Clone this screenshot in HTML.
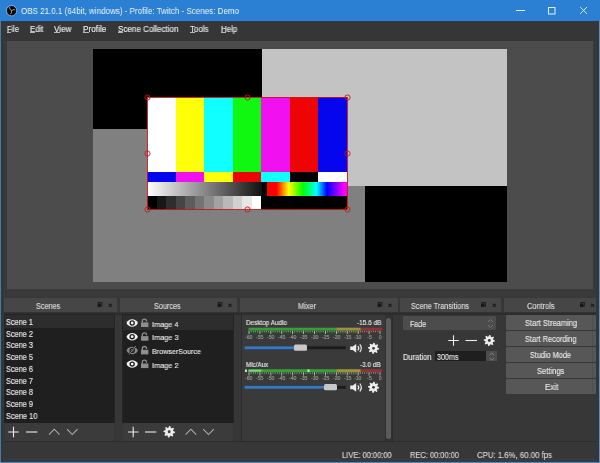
<!DOCTYPE html>
<html><head><meta charset="utf-8"><style>
html,body{margin:0;padding:0;}
body{width:600px;height:463px;position:relative;overflow:hidden;background:#383738;font-family:"Liberation Sans", sans-serif;}
span{white-space:nowrap;transform-origin:0 0;-webkit-text-stroke:0.15px currentColor;will-change:transform;}
</style></head><body>
<div style="position:absolute;left:0px;top:41px;width:600px;height:422px;background:#383738;"></div>
<div style="position:absolute;left:0px;top:0px;width:600px;height:21px;background:#2c80d3;"></div>
<div style="position:absolute;left:0px;top:21px;width:600px;height:20px;background:#373637;"></div>
<div style="position:absolute;left:0px;top:20px;width:600px;height:1px;background:#3a7cc0;"></div>
<div style="position:absolute;left:0px;top:21px;width:600px;height:1px;background:#2a3c50;"></div>
<div style="position:absolute;left:0px;top:22px;width:600px;height:1px;background:#33373d;"></div>
<div style="position:absolute;left:3.5px;top:41px;width:592.5px;height:257px;background:#3a393a;"></div>
<div style="position:absolute;left:7px;top:41px;width:586px;height:248px;background:#4c4c4c;"></div>
<div style="position:absolute;left:93px;top:49px;width:414px;height:233px;background:#808080;"></div>
<div style="position:absolute;left:93px;top:49px;width:169px;height:80px;background:#000;"></div>
<div style="position:absolute;left:262px;top:49px;width:245px;height:137px;background:#c3c3c3;"></div>
<div style="position:absolute;left:365px;top:186px;width:142px;height:96px;background:#000;"></div>
<div style="position:absolute;left:147.0px;top:97px;width:28.569999999999993px;height:75px;background:#fff;"></div>
<div style="position:absolute;left:147.0px;top:172px;width:28.569999999999993px;height:9.5px;background:#0606ee;"></div>
<div style="position:absolute;left:175.57px;top:97px;width:28.569999999999993px;height:75px;background:#ffff08;"></div>
<div style="position:absolute;left:175.57px;top:172px;width:28.569999999999993px;height:9.5px;background:#f010f0;"></div>
<div style="position:absolute;left:204.14px;top:97px;width:28.57000000000002px;height:75px;background:#10ffff;"></div>
<div style="position:absolute;left:204.14px;top:172px;width:28.57000000000002px;height:9.5px;background:#ffff08;"></div>
<div style="position:absolute;left:232.71px;top:97px;width:28.580000000000013px;height:75px;background:#10f810;"></div>
<div style="position:absolute;left:232.71px;top:172px;width:28.580000000000013px;height:9.5px;background:#ee0404;"></div>
<div style="position:absolute;left:261.29px;top:97px;width:28.569999999999993px;height:75px;background:#f010f0;"></div>
<div style="position:absolute;left:261.29px;top:172px;width:28.569999999999993px;height:9.5px;background:#10ffff;"></div>
<div style="position:absolute;left:289.86px;top:97px;width:28.569999999999993px;height:75px;background:#ee0404;"></div>
<div style="position:absolute;left:289.86px;top:172px;width:28.569999999999993px;height:9.5px;background:#000;"></div>
<div style="position:absolute;left:318.43px;top:97px;width:28.569999999999993px;height:75px;background:#0606ee;"></div>
<div style="position:absolute;left:318.43px;top:172px;width:28.569999999999993px;height:9.5px;background:#fff;"></div>
<div style="position:absolute;left:147px;top:181.5px;width:115px;height:14.5px;background:#000;background:linear-gradient(90deg,#fff,#111);"></div>
<div style="position:absolute;left:262px;top:181.5px;width:5px;height:14.5px;background:#000;"></div>
<div style="position:absolute;left:267px;top:181.5px;width:80px;height:14.5px;background:#000;background:linear-gradient(90deg,#f00 0%,#f00 12%,#ff0 27%,#0f0 45%,#0ff 62%,#00f 75%,#f0f 97%);"></div>
<div style="position:absolute;left:147px;top:196px;width:200px;height:13.5px;background:#000;"></div>
<div style="position:absolute;left:147.0px;top:196px;width:9.5px;height:13.5px;background:rgb(0,0,0);"></div>
<div style="position:absolute;left:156.5px;top:196px;width:9.5px;height:13.5px;background:rgb(23,23,23);"></div>
<div style="position:absolute;left:166.0px;top:196px;width:9.5px;height:13.5px;background:rgb(46,46,46);"></div>
<div style="position:absolute;left:175.5px;top:196px;width:9.5px;height:13.5px;background:rgb(69,69,69);"></div>
<div style="position:absolute;left:185.0px;top:196px;width:9.5px;height:13.5px;background:rgb(92,92,92);"></div>
<div style="position:absolute;left:194.5px;top:196px;width:9.5px;height:13.5px;background:rgb(115,115,115);"></div>
<div style="position:absolute;left:204.0px;top:196px;width:9.5px;height:13.5px;background:rgb(139,139,139);"></div>
<div style="position:absolute;left:213.5px;top:196px;width:9.5px;height:13.5px;background:rgb(162,162,162);"></div>
<div style="position:absolute;left:223.0px;top:196px;width:9.5px;height:13.5px;background:rgb(185,185,185);"></div>
<div style="position:absolute;left:232.5px;top:196px;width:9.5px;height:13.5px;background:rgb(208,208,208);"></div>
<div style="position:absolute;left:242.0px;top:196px;width:9.5px;height:13.5px;background:rgb(231,231,231);"></div>
<div style="position:absolute;left:251.5px;top:196px;width:9.5px;height:13.5px;background:rgb(255,255,255);"></div>
<svg style="position:absolute;left:0;top:0" width="600" height="463"><g fill="none" stroke="#c81818" stroke-width="0.9"><rect x="147.5" y="97.5" width="200" height="112"/><circle cx="147.5" cy="97.5" r="2.6"/><circle cx="147.5" cy="153.5" r="2.6"/><circle cx="147.5" cy="209.5" r="2.6"/><circle cx="247.5" cy="97.5" r="2.6"/><circle cx="247.5" cy="209.5" r="2.6"/><circle cx="347.5" cy="97.5" r="2.6"/><circle cx="347.5" cy="153.5" r="2.6"/><circle cx="347.5" cy="209.5" r="2.6"/></g></svg>
<svg style="position:absolute;left:0;top:0" width="600" height="21"><circle cx="11.6" cy="10.7" r="5.2" fill="#06080c" stroke="#9cc8f0" stroke-width="0.8"/><path d="M11.6 10.7 Q9.3 10.2 9.5 7.4 M11.6 10.7 Q13 8.8 14.8 9.7 M11.6 10.7 Q12 12.7 10.7 14" stroke="#9a9ea2" stroke-width="0.95" fill="none" stroke-linecap="round"/><line x1="516" y1="10.5" x2="525" y2="10.5" stroke="#e4f0fc" stroke-width="1"/><rect x="548.5" y="7.5" width="6.5" height="6.5" fill="none" stroke="#e4f0fc" stroke-width="1"/><path d="M580.2 7 L587 13.8 M587 7 L580.2 13.8" stroke="#e4f0fc" stroke-width="0.95"/></svg>
<div style="position:absolute;left:6.5px;top:32.3px;width:4.5px;height:0.8000000000000043px;background:#b8b7b8;"></div>
<div style="position:absolute;left:29.9px;top:32.3px;width:4.799999999999997px;height:0.8000000000000043px;background:#b8b7b8;"></div>
<div style="position:absolute;left:54.2px;top:32.3px;width:5.600000000000001px;height:0.8000000000000043px;background:#b8b7b8;"></div>
<div style="position:absolute;left:83.4px;top:32.3px;width:5.200000000000003px;height:0.8000000000000043px;background:#b8b7b8;"></div>
<div style="position:absolute;left:117.5px;top:32.3px;width:5.200000000000003px;height:0.8000000000000043px;background:#b8b7b8;"></div>
<div style="position:absolute;left:190px;top:32.3px;width:5px;height:0.8000000000000043px;background:#b8b7b8;"></div>
<div style="position:absolute;left:220.8px;top:32.3px;width:5.599999999999994px;height:0.8000000000000043px;background:#b8b7b8;"></div>
<div style="position:absolute;left:117px;top:298px;width:2.5px;height:14px;background:#383738;"></div>
<div style="position:absolute;left:236.5px;top:298px;width:2.5px;height:14px;background:#383738;"></div>
<div style="position:absolute;left:397.5px;top:298px;width:2.5px;height:14px;background:#383738;"></div>
<div style="position:absolute;left:501.2px;top:298px;width:2.5px;height:14px;background:#383738;"></div>
<div style="position:absolute;left:4px;top:298px;width:113px;height:14px;background:#474647;"></div>
<svg style="position:absolute;left:0;top:0" width="600" height="463"><g fill="#1a1a1a" stroke="none"><rect x="97.5" y="303.5" width="3.5" height="3.5"/><rect x="98.5" y="302.5" width="3.5" height="3.5" fill="none" stroke="#1a1a1a" stroke-width="0.8"/></g><path d="M108.8 303.8 L111.8 306.8 M111.8 303.8 L108.8 306.8" stroke="#1a1a1a" stroke-width="1.1"/></svg>
<div style="position:absolute;left:119.5px;top:298px;width:117.0px;height:14px;background:#474647;"></div>
<svg style="position:absolute;left:0;top:0" width="600" height="463"><g fill="#1a1a1a" stroke="none"><rect x="217.5" y="303.5" width="3.5" height="3.5"/><rect x="218.5" y="302.5" width="3.5" height="3.5" fill="none" stroke="#1a1a1a" stroke-width="0.8"/></g><path d="M228.5 303.8 L231.5 306.8 M231.5 303.8 L228.5 306.8" stroke="#1a1a1a" stroke-width="1.1"/></svg>
<div style="position:absolute;left:240px;top:298px;width:157.5px;height:14px;background:#474647;"></div>
<svg style="position:absolute;left:0;top:0" width="600" height="463"><g fill="#1a1a1a" stroke="none"><rect x="377.5" y="303.5" width="3.5" height="3.5"/><rect x="378.5" y="302.5" width="3.5" height="3.5" fill="none" stroke="#1a1a1a" stroke-width="0.8"/></g><path d="M388.5 303.8 L391.5 306.8 M391.5 303.8 L388.5 306.8" stroke="#1a1a1a" stroke-width="1.1"/></svg>
<div style="position:absolute;left:400px;top:298px;width:101.19999999999999px;height:14px;background:#474647;"></div>
<svg style="position:absolute;left:0;top:0" width="600" height="463"><g fill="#1a1a1a" stroke="none"><rect x="481" y="303.5" width="3.5" height="3.5"/><rect x="482" y="302.5" width="3.5" height="3.5" fill="none" stroke="#1a1a1a" stroke-width="0.8"/></g><path d="M492.8 303.8 L495.8 306.8 M495.8 303.8 L492.8 306.8" stroke="#1a1a1a" stroke-width="1.1"/></svg>
<div style="position:absolute;left:503.7px;top:298px;width:92.30000000000001px;height:14px;background:#474647;"></div>
<svg style="position:absolute;left:0;top:0" width="600" height="463"><g fill="#1a1a1a" stroke="none"><rect x="580" y="303.5" width="3.5" height="3.5"/><rect x="581" y="302.5" width="3.5" height="3.5" fill="none" stroke="#1a1a1a" stroke-width="0.8"/></g><path d="M591 303.8 L594 306.8 M594 303.8 L591 306.8" stroke="#1a1a1a" stroke-width="1.1"/></svg>
<div style="position:absolute;left:4px;top:312px;width:592px;height:3px;background:#343334;"></div>
<div style="position:absolute;left:4px;top:313px;width:592px;height:2px;background:#2e2d2e;"></div>
<div style="position:absolute;left:4px;top:441px;width:592px;height:1px;background:#2e2d2e;"></div>
<div style="position:absolute;left:0px;top:457.5px;width:600px;height:4.0px;background:#363a42;"></div>
<div style="position:absolute;left:4px;top:314px;width:110.5px;height:109px;background:#252425;"></div>
<div style="position:absolute;left:5px;top:315px;width:108.5px;height:107.5px;background:#201f20;"></div>
<div style="position:absolute;left:5px;top:315px;width:108.5px;height:12.800000000000011px;background:#2e2d2e;"></div>
<div style="position:absolute;left:5px;top:422.5px;width:108.5px;height:18.5px;background:#3c3b3c;"></div>
<div style="position:absolute;left:121.5px;top:314px;width:112.1px;height:109px;background:#252425;"></div>
<div style="position:absolute;left:122.5px;top:315px;width:110.1px;height:107.5px;background:#201f20;"></div>
<div style="position:absolute;left:122.5px;top:315px;width:110.1px;height:14.600000000000023px;background:#2e2d2e;"></div>
<div style="position:absolute;left:122.5px;top:422.5px;width:110.1px;height:18.5px;background:#3c3b3c;"></div>
<svg style="position:absolute;left:0;top:0" width="600" height="463"><path d="M8.2 432 H18.8 M13.5 426.7 V437.3" stroke="#ececec" stroke-width="1.1" fill="none"/><path d="M26 432 H37.5" stroke="#ececec" stroke-width="1.1" fill="none"/><path d="M49 434.6 L54.25 429.2 L59.5 434.6" stroke="#b0b0b0" stroke-width="1.05" fill="none"/><path d="M67 429.2 L72.25 434.6 L77.5 429.2" stroke="#b0b0b0" stroke-width="1.05" fill="none"/><path d="M127.89999999999999 432 H138.5 M133.2 426.7 V437.3" stroke="#ececec" stroke-width="1.1" fill="none"/><path d="M145 432 H156.3" stroke="#ececec" stroke-width="1.1" fill="none"/><polygon points="169.20,426.00 170.33,426.11 170.80,427.94 171.52,428.33 173.30,427.70 174.02,428.58 173.06,430.20 173.30,430.99 175.00,431.80 174.89,432.93 173.06,433.40 172.67,434.12 173.30,435.90 172.42,436.62 170.80,435.66 170.01,435.90 169.20,437.60 168.07,437.49 167.60,435.66 166.88,435.27 165.10,435.90 164.38,435.02 165.34,433.40 165.10,432.61 163.40,431.80 163.51,430.67 165.34,430.20 165.73,429.48 165.10,427.70 165.98,426.98 167.60,427.94 168.39,427.70" fill="#ececec"/><circle cx="169.2" cy="431.8" r="1.45" fill="#3c3b3c"/><path d="M185.6 434.6 L190.89999999999998 429.2 L196.2 434.6" stroke="#b0b0b0" stroke-width="1.05" fill="none"/><path d="M203.2 429.2 L208.5 434.6 L213.8 429.2" stroke="#b0b0b0" stroke-width="1.05" fill="none"/></svg>
<svg style="position:absolute;left:0;top:0" width="600" height="463"><path d="M126.49999999999999 323.0 C128.6 318.0 135.79999999999998 318.0 137.89999999999998 323.0 C135.79999999999998 328.0 128.6 328.0 126.49999999999999 323.0 Z" fill="#f2f2f2"/><circle cx="132.2" cy="323.0" r="2.7" fill="#1e1d1e"/><circle cx="132.2" cy="323.0" r="1.4" fill="#f2f2f2"/><rect x="141" y="322.40000000000003" width="7.4" height="4.6" fill="#8e8e8e"/><path d="M142.3 322.6 V321.0 Q142.3 319.1 144.4 319.1 Q146.5 319.1 146.5 321.0 V321.6" stroke="#8e8e8e" stroke-width="1.3" fill="none"/><path d="M126.49999999999999 336.7 C128.6 331.7 135.79999999999998 331.7 137.89999999999998 336.7 C135.79999999999998 341.7 128.6 341.7 126.49999999999999 336.7 Z" fill="#f2f2f2"/><circle cx="132.2" cy="336.7" r="2.7" fill="#1e1d1e"/><circle cx="132.2" cy="336.7" r="1.4" fill="#f2f2f2"/><rect x="141" y="336.1" width="7.4" height="4.6" fill="#8e8e8e"/><path d="M142.3 336.3 V334.7 Q142.3 332.8 144.4 332.8 Q146.5 332.8 146.5 334.7 V335.3" stroke="#8e8e8e" stroke-width="1.3" fill="none"/><path d="M126.49999999999999 350.4 C128.6 345.4 135.79999999999998 345.4 137.89999999999998 350.4 C135.79999999999998 355.4 128.6 355.4 126.49999999999999 350.4 Z" fill="#8a8a8a"/><circle cx="132.2" cy="350.4" r="2.7" fill="#1e1d1e"/><circle cx="132.2" cy="350.4" r="1.4" fill="#8a8a8a"/><path d="M129.0 354.59999999999997 L135.79999999999998 346.0" stroke="#1e1d1e" stroke-width="2"/><path d="M129.0 354.59999999999997 L135.79999999999998 346.0" stroke="#8a8a8a" stroke-width="1"/><rect x="141" y="349.8" width="7.4" height="4.6" fill="#8e8e8e"/><path d="M142.3 350.0 V348.4 Q142.3 346.5 144.4 346.5 Q146.5 346.5 146.5 348.4 V349.0" stroke="#8e8e8e" stroke-width="1.3" fill="none"/><path d="M126.49999999999999 364.1 C128.6 359.1 135.79999999999998 359.1 137.89999999999998 364.1 C135.79999999999998 369.1 128.6 369.1 126.49999999999999 364.1 Z" fill="#f2f2f2"/><circle cx="132.2" cy="364.1" r="2.7" fill="#1e1d1e"/><circle cx="132.2" cy="364.1" r="1.4" fill="#f2f2f2"/><rect x="141" y="363.50000000000006" width="7.4" height="4.6" fill="#8e8e8e"/><path d="M142.3 363.70000000000005 V362.1 Q142.3 360.20000000000005 144.4 360.20000000000005 Q146.5 360.20000000000005 146.5 362.1 V362.70000000000005" stroke="#8e8e8e" stroke-width="1.3" fill="none"/></svg>
<div style="position:absolute;left:240.5px;top:314.5px;width:152.5px;height:127.0px;background:#2c2b2c;"></div>
<div style="position:absolute;left:241.5px;top:315px;width:150.5px;height:126px;background:#3b3a3b;"></div>
<div style="position:absolute;left:384.5px;top:315px;width:7.5px;height:126px;background:#323132;"></div>
<div style="position:absolute;left:385.5px;top:318px;width:5.5px;height:121px;background:#5c5b5c;border-radius:2.5px;"></div>
<svg style="position:absolute;left:0;top:0" width="600" height="463"><rect x="248.5" y="327.7" width="87.69999999999999" height="3" fill="#3c9c3c"/><rect x="336.2" y="327.7" width="24.600000000000023" height="3" fill="#969440"/><rect x="360.8" y="327.7" width="21.19999999999999" height="3" fill="#8e3636"/><rect x="248.5" y="330.7" width="87.69999999999999" height="2.5" fill="#2c4a2e"/><rect x="336.2" y="330.7" width="24.600000000000023" height="2.5" fill="#4a4a30"/><rect x="360.8" y="330.7" width="21.19999999999999" height="2.5" fill="#4a3030"/><rect x="248.60" y="330.7" width="0.8" height="3.3" fill="#c8d8c8"/><rect x="250.78" y="330.7" width="0.8" height="1.6" fill="#90a090"/><rect x="252.97" y="330.7" width="0.8" height="1.6" fill="#90a090"/><rect x="255.15" y="330.7" width="0.8" height="1.6" fill="#90a090"/><rect x="257.33" y="330.7" width="0.8" height="1.6" fill="#90a090"/><rect x="259.52" y="330.7" width="0.8" height="3.3" fill="#c8d8c8"/><rect x="261.70" y="330.7" width="0.8" height="1.6" fill="#90a090"/><rect x="263.88" y="330.7" width="0.8" height="1.6" fill="#90a090"/><rect x="266.07" y="330.7" width="0.8" height="1.6" fill="#90a090"/><rect x="268.25" y="330.7" width="0.8" height="1.6" fill="#90a090"/><rect x="270.43" y="330.7" width="0.8" height="3.3" fill="#c8d8c8"/><rect x="272.62" y="330.7" width="0.8" height="1.6" fill="#90a090"/><rect x="274.80" y="330.7" width="0.8" height="1.6" fill="#90a090"/><rect x="276.98" y="330.7" width="0.8" height="1.6" fill="#90a090"/><rect x="279.17" y="330.7" width="0.8" height="1.6" fill="#90a090"/><rect x="281.35" y="330.7" width="0.8" height="3.3" fill="#c8d8c8"/><rect x="283.53" y="330.7" width="0.8" height="1.6" fill="#90a090"/><rect x="285.72" y="330.7" width="0.8" height="1.6" fill="#90a090"/><rect x="287.90" y="330.7" width="0.8" height="1.6" fill="#90a090"/><rect x="290.08" y="330.7" width="0.8" height="1.6" fill="#90a090"/><rect x="292.27" y="330.7" width="0.8" height="3.3" fill="#c8d8c8"/><rect x="294.45" y="330.7" width="0.8" height="1.6" fill="#90a090"/><rect x="296.63" y="330.7" width="0.8" height="1.6" fill="#90a090"/><rect x="298.82" y="330.7" width="0.8" height="1.6" fill="#90a090"/><rect x="301.00" y="330.7" width="0.8" height="1.6" fill="#90a090"/><rect x="303.18" y="330.7" width="0.8" height="3.3" fill="#c8d8c8"/><rect x="305.37" y="330.7" width="0.8" height="1.6" fill="#90a090"/><rect x="307.55" y="330.7" width="0.8" height="1.6" fill="#90a090"/><rect x="309.73" y="330.7" width="0.8" height="1.6" fill="#90a090"/><rect x="311.92" y="330.7" width="0.8" height="1.6" fill="#90a090"/><rect x="314.10" y="330.7" width="0.8" height="3.3" fill="#c8d8c8"/><rect x="316.28" y="330.7" width="0.8" height="1.6" fill="#90a090"/><rect x="318.47" y="330.7" width="0.8" height="1.6" fill="#90a090"/><rect x="320.65" y="330.7" width="0.8" height="1.6" fill="#90a090"/><rect x="322.83" y="330.7" width="0.8" height="1.6" fill="#90a090"/><rect x="325.02" y="330.7" width="0.8" height="3.3" fill="#c8d8c8"/><rect x="327.20" y="330.7" width="0.8" height="1.6" fill="#90a090"/><rect x="329.38" y="330.7" width="0.8" height="1.6" fill="#90a090"/><rect x="331.57" y="330.7" width="0.8" height="1.6" fill="#90a090"/><rect x="333.75" y="330.7" width="0.8" height="1.6" fill="#90a090"/><rect x="335.93" y="330.7" width="0.8" height="3.3" fill="#c8d8c8"/><rect x="338.12" y="330.7" width="0.8" height="1.6" fill="#90a090"/><rect x="340.30" y="330.7" width="0.8" height="1.6" fill="#90a090"/><rect x="342.48" y="330.7" width="0.8" height="1.6" fill="#90a090"/><rect x="344.67" y="330.7" width="0.8" height="1.6" fill="#90a090"/><rect x="346.85" y="330.7" width="0.8" height="3.3" fill="#c8d8c8"/><rect x="349.03" y="330.7" width="0.8" height="1.6" fill="#90a090"/><rect x="351.22" y="330.7" width="0.8" height="1.6" fill="#90a090"/><rect x="353.40" y="330.7" width="0.8" height="1.6" fill="#90a090"/><rect x="355.58" y="330.7" width="0.8" height="1.6" fill="#90a090"/><rect x="357.77" y="330.7" width="0.8" height="3.3" fill="#c8d8c8"/><rect x="359.95" y="330.7" width="0.8" height="1.6" fill="#90a090"/><rect x="362.13" y="330.7" width="0.8" height="1.6" fill="#90a090"/><rect x="364.32" y="330.7" width="0.8" height="1.6" fill="#90a090"/><rect x="366.50" y="330.7" width="0.8" height="1.6" fill="#90a090"/><rect x="368.68" y="330.7" width="0.8" height="3.3" fill="#c8d8c8"/><rect x="370.87" y="330.7" width="0.8" height="1.6" fill="#90a090"/><rect x="373.05" y="330.7" width="0.8" height="1.6" fill="#90a090"/><rect x="375.23" y="330.7" width="0.8" height="1.6" fill="#90a090"/><rect x="377.42" y="330.7" width="0.8" height="1.6" fill="#90a090"/><rect x="379.60" y="330.7" width="0.8" height="3.3" fill="#c8d8c8"/><rect x="248.5" y="369.2" width="87.69999999999999" height="3" fill="#3c9c3c"/><rect x="336.2" y="369.2" width="24.600000000000023" height="3" fill="#969440"/><rect x="360.8" y="369.2" width="21.19999999999999" height="3" fill="#8e3636"/><rect x="248.5" y="372.2" width="87.69999999999999" height="2.5" fill="#2c4a2e"/><rect x="336.2" y="372.2" width="24.600000000000023" height="2.5" fill="#4a4a30"/><rect x="360.8" y="372.2" width="21.19999999999999" height="2.5" fill="#4a3030"/><rect x="248.5" y="369.7" width="13.0" height="2" fill="#78d878"/><rect x="245" y="369.5" width="2" height="2.4" fill="#c8f0c8"/><rect x="307.5" y="369.5" width="2" height="2.4" fill="#c8f0c8"/><rect x="248.60" y="372.2" width="0.8" height="3.3" fill="#c8d8c8"/><rect x="250.78" y="372.2" width="0.8" height="1.6" fill="#90a090"/><rect x="252.97" y="372.2" width="0.8" height="1.6" fill="#90a090"/><rect x="255.15" y="372.2" width="0.8" height="1.6" fill="#90a090"/><rect x="257.33" y="372.2" width="0.8" height="1.6" fill="#90a090"/><rect x="259.52" y="372.2" width="0.8" height="3.3" fill="#c8d8c8"/><rect x="261.70" y="372.2" width="0.8" height="1.6" fill="#90a090"/><rect x="263.88" y="372.2" width="0.8" height="1.6" fill="#90a090"/><rect x="266.07" y="372.2" width="0.8" height="1.6" fill="#90a090"/><rect x="268.25" y="372.2" width="0.8" height="1.6" fill="#90a090"/><rect x="270.43" y="372.2" width="0.8" height="3.3" fill="#c8d8c8"/><rect x="272.62" y="372.2" width="0.8" height="1.6" fill="#90a090"/><rect x="274.80" y="372.2" width="0.8" height="1.6" fill="#90a090"/><rect x="276.98" y="372.2" width="0.8" height="1.6" fill="#90a090"/><rect x="279.17" y="372.2" width="0.8" height="1.6" fill="#90a090"/><rect x="281.35" y="372.2" width="0.8" height="3.3" fill="#c8d8c8"/><rect x="283.53" y="372.2" width="0.8" height="1.6" fill="#90a090"/><rect x="285.72" y="372.2" width="0.8" height="1.6" fill="#90a090"/><rect x="287.90" y="372.2" width="0.8" height="1.6" fill="#90a090"/><rect x="290.08" y="372.2" width="0.8" height="1.6" fill="#90a090"/><rect x="292.27" y="372.2" width="0.8" height="3.3" fill="#c8d8c8"/><rect x="294.45" y="372.2" width="0.8" height="1.6" fill="#90a090"/><rect x="296.63" y="372.2" width="0.8" height="1.6" fill="#90a090"/><rect x="298.82" y="372.2" width="0.8" height="1.6" fill="#90a090"/><rect x="301.00" y="372.2" width="0.8" height="1.6" fill="#90a090"/><rect x="303.18" y="372.2" width="0.8" height="3.3" fill="#c8d8c8"/><rect x="305.37" y="372.2" width="0.8" height="1.6" fill="#90a090"/><rect x="307.55" y="372.2" width="0.8" height="1.6" fill="#90a090"/><rect x="309.73" y="372.2" width="0.8" height="1.6" fill="#90a090"/><rect x="311.92" y="372.2" width="0.8" height="1.6" fill="#90a090"/><rect x="314.10" y="372.2" width="0.8" height="3.3" fill="#c8d8c8"/><rect x="316.28" y="372.2" width="0.8" height="1.6" fill="#90a090"/><rect x="318.47" y="372.2" width="0.8" height="1.6" fill="#90a090"/><rect x="320.65" y="372.2" width="0.8" height="1.6" fill="#90a090"/><rect x="322.83" y="372.2" width="0.8" height="1.6" fill="#90a090"/><rect x="325.02" y="372.2" width="0.8" height="3.3" fill="#c8d8c8"/><rect x="327.20" y="372.2" width="0.8" height="1.6" fill="#90a090"/><rect x="329.38" y="372.2" width="0.8" height="1.6" fill="#90a090"/><rect x="331.57" y="372.2" width="0.8" height="1.6" fill="#90a090"/><rect x="333.75" y="372.2" width="0.8" height="1.6" fill="#90a090"/><rect x="335.93" y="372.2" width="0.8" height="3.3" fill="#c8d8c8"/><rect x="338.12" y="372.2" width="0.8" height="1.6" fill="#90a090"/><rect x="340.30" y="372.2" width="0.8" height="1.6" fill="#90a090"/><rect x="342.48" y="372.2" width="0.8" height="1.6" fill="#90a090"/><rect x="344.67" y="372.2" width="0.8" height="1.6" fill="#90a090"/><rect x="346.85" y="372.2" width="0.8" height="3.3" fill="#c8d8c8"/><rect x="349.03" y="372.2" width="0.8" height="1.6" fill="#90a090"/><rect x="351.22" y="372.2" width="0.8" height="1.6" fill="#90a090"/><rect x="353.40" y="372.2" width="0.8" height="1.6" fill="#90a090"/><rect x="355.58" y="372.2" width="0.8" height="1.6" fill="#90a090"/><rect x="357.77" y="372.2" width="0.8" height="3.3" fill="#c8d8c8"/><rect x="359.95" y="372.2" width="0.8" height="1.6" fill="#90a090"/><rect x="362.13" y="372.2" width="0.8" height="1.6" fill="#90a090"/><rect x="364.32" y="372.2" width="0.8" height="1.6" fill="#90a090"/><rect x="366.50" y="372.2" width="0.8" height="1.6" fill="#90a090"/><rect x="368.68" y="372.2" width="0.8" height="3.3" fill="#c8d8c8"/><rect x="370.87" y="372.2" width="0.8" height="1.6" fill="#90a090"/><rect x="373.05" y="372.2" width="0.8" height="1.6" fill="#90a090"/><rect x="375.23" y="372.2" width="0.8" height="1.6" fill="#90a090"/><rect x="377.42" y="372.2" width="0.8" height="1.6" fill="#90a090"/><rect x="379.60" y="372.2" width="0.8" height="3.3" fill="#c8d8c8"/><path d="M350.2 346.5 H352.8 L356.2 343.9 V352.7 L352.8 350.09999999999997 H350.2 Z" fill="#ececec"/><path d="M357.8 346.2 Q359.8 348.29999999999995 357.8 350.4 M359.8 344.4 Q362.9 348.29999999999995 359.8 352.2" stroke="#ececec" stroke-width="1.2" fill="none"/><polygon points="373.50,342.70 374.59,342.81 375.04,344.57 375.74,344.95 377.46,344.34 378.16,345.19 377.23,346.76 377.45,347.51 379.10,348.30 378.99,349.39 377.23,349.84 376.85,350.54 377.46,352.26 376.61,352.96 375.04,352.03 374.29,352.25 373.50,353.90 372.41,353.79 371.96,352.03 371.26,351.65 369.54,352.26 368.84,351.41 369.77,349.84 369.55,349.09 367.90,348.30 368.01,347.21 369.77,346.76 370.15,346.06 369.54,344.34 370.39,343.64 371.96,344.57 372.71,344.35" fill="#ececec"/><circle cx="373.5" cy="348.3" r="1.40" fill="#3b3a3b"/><path d="M350.2 385.6 H352.8 L356.2 383.0 V391.8 L352.8 389.2 H350.2 Z" fill="#ececec"/><path d="M357.8 385.3 Q359.8 387.4 357.8 389.5 M359.8 383.5 Q362.9 387.4 359.8 391.3" stroke="#ececec" stroke-width="1.2" fill="none"/><polygon points="373.50,381.70 374.59,381.81 375.04,383.57 375.74,383.95 377.46,383.34 378.16,384.19 377.23,385.76 377.45,386.51 379.10,387.30 378.99,388.39 377.23,388.84 376.85,389.54 377.46,391.26 376.61,391.96 375.04,391.03 374.29,391.25 373.50,392.90 372.41,392.79 371.96,391.03 371.26,390.65 369.54,391.26 368.84,390.41 369.77,388.84 369.55,388.09 367.90,387.30 368.01,386.21 369.77,385.76 370.15,385.06 369.54,383.34 370.39,382.64 371.96,383.57 372.71,383.35" fill="#ececec"/><circle cx="373.5" cy="387.3" r="1.40" fill="#3b3a3b"/><rect x="244.5" y="346.3" width="101.5" height="3" fill="#1e1d1e"/><rect x="244.5" y="346.3" width="50" height="3" fill="#3579c4"/><rect x="294" y="344.6" width="13" height="6.2" rx="1.5" fill="#c8c8c8"/><rect x="244.5" y="385.8" width="101.5" height="3" fill="#1e1d1e"/><rect x="244.5" y="385.8" width="80" height="3" fill="#3579c4"/><rect x="324" y="384" width="13" height="6.2" rx="1.5" fill="#c8c8c8"/></svg>
<div style="position:absolute;left:402.7px;top:316.2px;width:93.30000000000001px;height:14.0px;background:#4d4c4d;border-radius:1px;"></div>
<svg style="position:absolute;left:0;top:0" width="600" height="463"><path d="M488 322 L490.5 319.5 L493 322 M488 325 L490.5 327.5 L493 325" stroke="#777" stroke-width="0.9" fill="none"/></svg>
<svg style="position:absolute;left:0;top:0" width="600" height="463"><path d="M448.2 340.5 H458.8 M453.5 335.2 V345.8" stroke="#ececec" stroke-width="1.1" fill="none"/><path d="M465.5 340.5 H477" stroke="#ececec" stroke-width="1.1" fill="none"/><polygon points="489.30,334.90 490.39,335.01 490.84,336.77 491.54,337.15 493.26,336.54 493.96,337.39 493.03,338.96 493.25,339.71 494.90,340.50 494.79,341.59 493.03,342.04 492.65,342.74 493.26,344.46 492.41,345.16 490.84,344.23 490.09,344.45 489.30,346.10 488.21,345.99 487.76,344.23 487.06,343.85 485.34,344.46 484.64,343.61 485.57,342.04 485.35,341.29 483.70,340.50 483.81,339.41 485.57,338.96 485.95,338.26 485.34,336.54 486.19,335.84 487.76,336.77 488.51,336.55" fill="#ececec"/><circle cx="489.3" cy="340.5" r="1.40" fill="#383738"/></svg>
<div style="position:absolute;left:434.5px;top:350.8px;width:51.5px;height:10.5px;background:#201f20;"></div>
<div style="position:absolute;left:486px;top:350.8px;width:11px;height:10.5px;background:#4d4c4d;"></div>
<svg style="position:absolute;left:0;top:0" width="600" height="463"><path d="M489.5 355 L491.7 353 L494 355 M489.5 358 L491.7 360 L494 358" stroke="#888" stroke-width="0.9" fill="none"/></svg>
<div style="position:absolute;left:506px;top:315.0px;width:89.5px;height:14.600000000000023px;background:#585758;border-radius:1px;"></div>
<div style="position:absolute;left:592px;top:315.0px;width:1px;height:14.600000000000023px;background:#504f50;"></div>
<div style="position:absolute;left:506px;top:331.1px;width:89.5px;height:14.600000000000023px;background:#585758;border-radius:1px;"></div>
<div style="position:absolute;left:592px;top:331.1px;width:1px;height:14.600000000000023px;background:#504f50;"></div>
<div style="position:absolute;left:506px;top:347.2px;width:89.5px;height:14.600000000000023px;background:#585758;border-radius:1px;"></div>
<div style="position:absolute;left:592px;top:347.2px;width:1px;height:14.600000000000023px;background:#504f50;"></div>
<div style="position:absolute;left:506px;top:363.3px;width:89.5px;height:14.600000000000023px;background:#585758;border-radius:1px;"></div>
<div style="position:absolute;left:592px;top:363.3px;width:1px;height:14.600000000000023px;background:#504f50;"></div>
<div style="position:absolute;left:506px;top:379.4px;width:89.5px;height:14.600000000000023px;background:#585758;border-radius:1px;"></div>
<div style="position:absolute;left:592px;top:379.4px;width:1px;height:14.600000000000023px;background:#504f50;"></div>
<div style="position:absolute;left:0px;top:21px;width:1.3px;height:442px;background:#5079a0;"></div>
<div style="position:absolute;left:1.3px;top:21px;width:2.2px;height:442px;background:#30373f;"></div>
<div style="position:absolute;left:599px;top:21px;width:1px;height:442px;background:#6a8cae;"></div>
<div style="position:absolute;left:596px;top:21px;width:3px;height:442px;background:#30373f;"></div>
<div style="position:absolute;left:0px;top:461.5px;width:600px;height:1.5px;background:#5a84ac;"></div>
<span style="position:absolute;left:21.00px;top:6.41px;font-size:9.6px;line-height:10.723px;color:#eef5fc;transform:scaleX(0.8349);-webkit-text-stroke:0;">OBS 21.0.1 (64bit, windows) - Profile: Twitch - Scenes: Demo</span>
<span style="position:absolute;left:6.50px;top:25.48px;font-size:8.2px;line-height:9.159px;color:#e8e7e8;transform:scaleX(0.9013);">File</span>
<span style="position:absolute;left:29.90px;top:25.48px;font-size:8.2px;line-height:9.159px;color:#e8e7e8;transform:scaleX(0.9497);">Edit</span>
<span style="position:absolute;left:54.20px;top:25.48px;font-size:8.2px;line-height:9.159px;color:#e8e7e8;transform:scaleX(0.9824);">View</span>
<span style="position:absolute;left:83.40px;top:25.48px;font-size:8.2px;line-height:9.159px;color:#e8e7e8;transform:scaleX(1.0078);">Profile</span>
<span style="position:absolute;left:117.50px;top:25.48px;font-size:8.2px;line-height:9.159px;color:#e8e7e8;transform:scaleX(0.9845);">Scene Collection</span>
<span style="position:absolute;left:190.00px;top:25.48px;font-size:8.2px;line-height:9.159px;color:#e8e7e8;transform:scaleX(0.9673);">Tools</span>
<span style="position:absolute;left:220.80px;top:25.48px;font-size:8.2px;line-height:9.159px;color:#e8e7e8;transform:scaleX(0.9618);">Help</span>
<span style="position:absolute;left:35.80px;top:302.09px;font-size:8.3px;line-height:9.271px;color:#dcdbdc;transform:scaleX(0.8740);">Scenes</span>
<span style="position:absolute;left:153.70px;top:302.09px;font-size:8.3px;line-height:9.271px;color:#dcdbdc;transform:scaleX(0.8739);">Sources</span>
<span style="position:absolute;left:298.00px;top:302.09px;font-size:8.3px;line-height:9.271px;color:#dcdbdc;transform:scaleX(0.8875);">Mixer</span>
<span style="position:absolute;left:411.00px;top:302.09px;font-size:8.3px;line-height:9.271px;color:#dcdbdc;transform:scaleX(0.8794);">Scene Transitions</span>
<span style="position:absolute;left:526.80px;top:302.09px;font-size:8.3px;line-height:9.271px;color:#dcdbdc;transform:scaleX(0.8930);">Controls</span>
<span style="position:absolute;left:6.40px;top:317.91px;font-size:8.5px;line-height:9.495px;color:#e8e7e8;transform:scaleX(0.8621);">Scene 1</span>
<span style="position:absolute;left:6.40px;top:329.65px;font-size:8.5px;line-height:9.495px;color:#e8e7e8;transform:scaleX(0.8621);">Scene 2</span>
<span style="position:absolute;left:6.40px;top:341.39px;font-size:8.5px;line-height:9.495px;color:#e8e7e8;transform:scaleX(0.8621);">Scene 3</span>
<span style="position:absolute;left:6.40px;top:353.13px;font-size:8.5px;line-height:9.495px;color:#e8e7e8;transform:scaleX(0.8621);">Scene 5</span>
<span style="position:absolute;left:6.40px;top:364.87px;font-size:8.5px;line-height:9.495px;color:#e8e7e8;transform:scaleX(0.8621);">Scene 6</span>
<span style="position:absolute;left:6.40px;top:376.61px;font-size:8.5px;line-height:9.495px;color:#e8e7e8;transform:scaleX(0.8621);">Scene 7</span>
<span style="position:absolute;left:6.40px;top:388.35px;font-size:8.5px;line-height:9.495px;color:#e8e7e8;transform:scaleX(0.8621);">Scene 8</span>
<span style="position:absolute;left:6.40px;top:400.09px;font-size:8.5px;line-height:9.495px;color:#e8e7e8;transform:scaleX(0.8621);">Scene 9</span>
<span style="position:absolute;left:6.40px;top:411.83px;font-size:8.5px;line-height:9.495px;color:#e8e7e8;transform:scaleX(0.8741);">Scene 10</span>
<span style="position:absolute;left:151.80px;top:320.66px;font-size:8px;line-height:8.936px;color:#e8e7e8;transform:scaleX(0.9168);">Image 4</span>
<span style="position:absolute;left:151.80px;top:334.28px;font-size:8px;line-height:8.936px;color:#e8e7e8;transform:scaleX(0.9168);">Image 3</span>
<span style="position:absolute;left:151.80px;top:347.90px;font-size:8px;line-height:8.936px;color:#e8e7e8;transform:scaleX(0.8960);">BrowserSource</span>
<span style="position:absolute;left:151.80px;top:361.52px;font-size:8px;line-height:8.936px;color:#e8e7e8;transform:scaleX(0.9168);">Image 2</span>
<span style="position:absolute;left:246.00px;top:319.00px;font-size:7.4px;line-height:8.266px;color:#e8e7e8;transform:scaleX(0.8600);">Desktop Audio</span>
<span style="position:absolute;left:356.60px;top:318.80px;font-size:7.4px;line-height:8.266px;color:#e8e7e8;transform:scaleX(0.8729);">-15.6 dB</span>
<span style="position:absolute;left:245.70px;top:360.70px;font-size:7.4px;line-height:8.266px;color:#e8e7e8;transform:scaleX(0.8480);">Mic/Aux</span>
<span style="position:absolute;left:360.30px;top:361.00px;font-size:7.4px;line-height:8.266px;color:#e8e7e8;transform:scaleX(0.8682);">-3.0 dB</span>
<span style="position:absolute;left:245.25px;top:335.14px;font-size:4.6px;line-height:5.138px;color:#959595;transform:scaleX(1.1294);">-60</span>
<span style="position:absolute;left:256.17px;top:335.14px;font-size:4.6px;line-height:5.138px;color:#959595;transform:scaleX(1.1294);">-55</span>
<span style="position:absolute;left:267.08px;top:335.14px;font-size:4.6px;line-height:5.138px;color:#959595;transform:scaleX(1.1294);">-50</span>
<span style="position:absolute;left:278.00px;top:335.14px;font-size:4.6px;line-height:5.138px;color:#959595;transform:scaleX(1.1294);">-45</span>
<span style="position:absolute;left:288.92px;top:335.14px;font-size:4.6px;line-height:5.138px;color:#959595;transform:scaleX(1.1294);">-40</span>
<span style="position:absolute;left:299.83px;top:335.14px;font-size:4.6px;line-height:5.138px;color:#959595;transform:scaleX(1.1294);">-35</span>
<span style="position:absolute;left:310.75px;top:335.14px;font-size:4.6px;line-height:5.138px;color:#959595;transform:scaleX(1.1294);">-30</span>
<span style="position:absolute;left:321.67px;top:335.14px;font-size:4.6px;line-height:5.138px;color:#959595;transform:scaleX(1.1294);">-25</span>
<span style="position:absolute;left:332.58px;top:335.14px;font-size:4.6px;line-height:5.138px;color:#959595;transform:scaleX(1.1294);">-20</span>
<span style="position:absolute;left:343.50px;top:335.14px;font-size:4.6px;line-height:5.138px;color:#959595;transform:scaleX(1.1294);">-15</span>
<span style="position:absolute;left:354.42px;top:335.14px;font-size:4.6px;line-height:5.138px;color:#959595;transform:scaleX(1.1294);">-10</span>
<span style="position:absolute;left:366.58px;top:335.14px;font-size:4.6px;line-height:5.138px;color:#959595;transform:scaleX(1.2214);">-5</span>
<span style="position:absolute;left:378.75px;top:335.14px;font-size:4.6px;line-height:5.138px;color:#959595;transform:scaleX(0.9756);">0</span>
<span style="position:absolute;left:245.25px;top:375.74px;font-size:4.6px;line-height:5.138px;color:#959595;transform:scaleX(1.1294);">-60</span>
<span style="position:absolute;left:256.17px;top:375.74px;font-size:4.6px;line-height:5.138px;color:#959595;transform:scaleX(1.1294);">-55</span>
<span style="position:absolute;left:267.08px;top:375.74px;font-size:4.6px;line-height:5.138px;color:#959595;transform:scaleX(1.1294);">-50</span>
<span style="position:absolute;left:278.00px;top:375.74px;font-size:4.6px;line-height:5.138px;color:#959595;transform:scaleX(1.1294);">-45</span>
<span style="position:absolute;left:288.92px;top:375.74px;font-size:4.6px;line-height:5.138px;color:#959595;transform:scaleX(1.1294);">-40</span>
<span style="position:absolute;left:299.83px;top:375.74px;font-size:4.6px;line-height:5.138px;color:#959595;transform:scaleX(1.1294);">-35</span>
<span style="position:absolute;left:310.75px;top:375.74px;font-size:4.6px;line-height:5.138px;color:#959595;transform:scaleX(1.1294);">-30</span>
<span style="position:absolute;left:321.67px;top:375.74px;font-size:4.6px;line-height:5.138px;color:#959595;transform:scaleX(1.1294);">-25</span>
<span style="position:absolute;left:332.58px;top:375.74px;font-size:4.6px;line-height:5.138px;color:#959595;transform:scaleX(1.1294);">-20</span>
<span style="position:absolute;left:343.50px;top:375.74px;font-size:4.6px;line-height:5.138px;color:#959595;transform:scaleX(1.1294);">-15</span>
<span style="position:absolute;left:354.42px;top:375.74px;font-size:4.6px;line-height:5.138px;color:#959595;transform:scaleX(1.1294);">-10</span>
<span style="position:absolute;left:366.58px;top:375.74px;font-size:4.6px;line-height:5.138px;color:#959595;transform:scaleX(1.2214);">-5</span>
<span style="position:absolute;left:378.75px;top:375.74px;font-size:4.6px;line-height:5.138px;color:#959595;transform:scaleX(0.9756);">0</span>
<span style="position:absolute;left:410.00px;top:319.80px;font-size:8.4px;line-height:9.383px;color:#e8e7e8;transform:scaleX(0.8380);">Fade</span>
<span style="position:absolute;left:402.90px;top:352.90px;font-size:8.4px;line-height:9.383px;color:#e8e7e8;transform:scaleX(0.8971);">Duration</span>
<span style="position:absolute;left:436.90px;top:352.90px;font-size:8.4px;line-height:9.383px;color:#e8e7e8;transform:scaleX(0.8552);">300ms</span>
<span style="position:absolute;left:524.50px;top:318.80px;font-size:8.4px;line-height:9.383px;color:#e8e7e8;transform:scaleX(0.8954);">Start Streaming</span>
<span style="position:absolute;left:524.50px;top:334.90px;font-size:8.4px;line-height:9.383px;color:#e8e7e8;transform:scaleX(0.8851);">Start Recording</span>
<span style="position:absolute;left:529.90px;top:351.00px;font-size:8.4px;line-height:9.383px;color:#e8e7e8;transform:scaleX(0.8718);">Studio Mode</span>
<span style="position:absolute;left:536.70px;top:367.10px;font-size:8.4px;line-height:9.383px;color:#e8e7e8;transform:scaleX(0.9020);">Settings</span>
<span style="position:absolute;left:544.50px;top:383.20px;font-size:8.4px;line-height:9.383px;color:#e8e7e8;transform:scaleX(0.9521);">Exit</span>
<span style="position:absolute;left:342.30px;top:450.52px;font-size:8.6px;line-height:9.606px;color:#d8d7d8;transform:scaleX(0.8741);">LIVE: 00:00:00</span>
<span style="position:absolute;left:410.00px;top:450.52px;font-size:8.6px;line-height:9.606px;color:#d8d7d8;transform:scaleX(0.8692);">REC: 00:00:00</span>
<span style="position:absolute;left:477.00px;top:450.52px;font-size:8.6px;line-height:9.606px;color:#d8d7d8;transform:scaleX(0.9075);">CPU: 1.6%, 60.00 fps</span>
</body></html>
